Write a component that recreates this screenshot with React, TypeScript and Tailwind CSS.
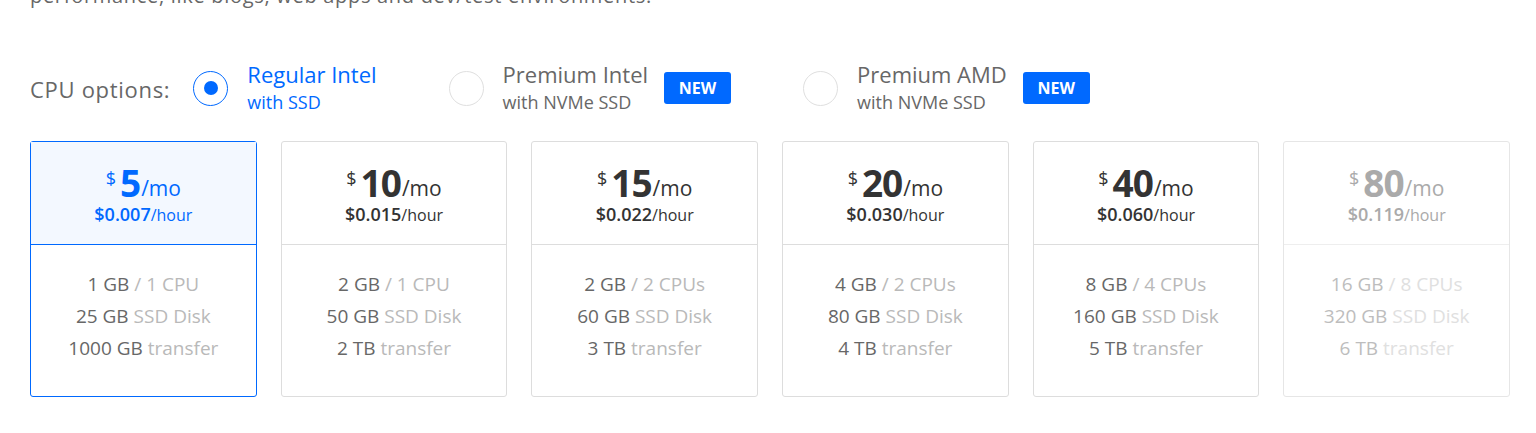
import React from "react";

// Droplet plan picker: CPU option radios + monthly plan cards

const OPTIONS = [
  { title: "Regular Intel", sub: "with SSD", selected: true, isNew: false },
  { title: "Premium Intel", sub: "with NVMe SSD", selected: false, isNew: true },
  { title: "Premium AMD", sub: "with NVMe SSD", selected: false, isNew: true },
];

const PLANS = [
  { mo: "5", hour: "$0.007", ram: "1 GB", cpu: "/ 1 CPU", disk: "25 GB", transfer: "1000 GB", state: "selected" },
  { mo: "10", hour: "$0.015", ram: "2 GB", cpu: "/ 1 CPU", disk: "50 GB", transfer: "2 TB", state: "normal" },
  { mo: "15", hour: "$0.022", ram: "2 GB", cpu: "/ 2 CPUs", disk: "60 GB", transfer: "3 TB", state: "normal" },
  { mo: "20", hour: "$0.030", ram: "4 GB", cpu: "/ 2 CPUs", disk: "80 GB", transfer: "4 TB", state: "normal" },
  { mo: "40", hour: "$0.060", ram: "8 GB", cpu: "/ 4 CPUs", disk: "160 GB", transfer: "5 TB", state: "normal" },
  { mo: "80", hour: "$0.119", ram: "16 GB", cpu: "/ 8 CPUs", disk: "320 GB", transfer: "6 TB", state: "disabled" },
];

function Radio({ selected }: { selected: boolean }) {
  return (
    <div
      className={
        "w-[35px] h-[35px] rounded-full border flex items-center justify-center bg-white " +
        (selected ? "border-[#0069ff]" : "border-[#dfdfdf]")
      }
    >
      {selected && <div className="w-[14px] h-[14px] rounded-full bg-[#0069ff]" />}
    </div>
  );
}

function PlanCard({ plan }: { plan: (typeof PLANS)[number] }) {
  const sel = plan.state === "selected";
  const dis = plan.state === "disabled";
  const priceColor = sel ? "text-[#0069ff]" : dis ? "text-[#aaaaaa]" : "text-[#333333]";
  const strong = dis ? "text-[#bdbdbd]" : "text-[#676767]";
  const light = dis ? "text-[#e0e0e0]" : "text-[#b9b9b9]";
  return (
    <div
      className={
        "rounded-[3px] border flex flex-col h-[256px] " +
        (sel ? "border-[#0069ff]" : dis ? "border-[#e6e6e6]" : "border-[#dddddd]")
      }
    >
      <div
        className={
          "h-[103px] flex flex-col items-center pt-[22px] border-b " +
          (sel ? "bg-[#f3f8ff] border-[#0069ff]" : dis ? "border-[#eeeeee]" : "border-[#dddddd]") +
          " " + priceColor
        }
      >
        <div className="flex items-start h-[38px]">
          <span className="text-[18px] leading-[20px] mt-[4px] mr-[4px]">$</span>
          <span className="text-[37px] font-bold tracking-[-1px] leading-[38px]">{plan.mo}</span>
          <span className="text-[21px] leading-[24px] mt-[12px] ml-[1px]">/mo</span>
        </div>
        <div className="leading-[24px]">
          <span className="text-[18px] font-semibold">{plan.hour}</span>
          <span className="text-[16px]">/hour</span>
        </div>
      </div>
      <div className="flex flex-col items-center pt-[23px] text-[19px] leading-[32px]">
        <div>
          <span className={strong}>{plan.ram}</span> <span className={light}>{plan.cpu}</span>
        </div>
        <div>
          <span className={strong}>{plan.disk}</span> <span className={light}>SSD Disk</span>
        </div>
        <div>
          <span className={strong}>{plan.transfer}</span> <span className={light}>transfer</span>
        </div>
      </div>
    </div>
  );
}

export default function App() {
  return (
    <div className="w-[1536px] h-[433px] bg-white overflow-hidden font-['Open_Sans',sans-serif]">
      <div className="pl-[30px] pr-[26px]">
        <p className="text-[20px] tracking-[0.7px] text-[#676767] leading-[24px] mt-[-16px]">
          performance, like blogs, web apps and dev/test environments.
        </p>

        {/* CPU options */}
        <div className="flex items-center mt-[48px] h-[64px]">
          <span className="text-[22px] tracking-[0.7px] text-[#676767] mr-[23px] mt-[2px]">CPU options:</span>
          {OPTIONS.map((o) => (
            <div key={o.title} className="flex items-center mr-[72px]">
              <Radio selected={o.selected} />
              <div className={"ml-[19px] flex flex-col " + (o.selected ? "text-[#0069ff]" : "text-[#676767]")}>
                <span className="text-[22px] leading-[28px]">{o.title}</span>
                <span className="text-[18px] leading-[28px]">{o.sub}</span>
              </div>
              {o.isNew && (
                <span className="ml-[16px] w-[67px] h-[32px] rounded-[3px] bg-[#0069ff] text-white text-[16px] font-bold flex items-center justify-center">
                  NEW
                </span>
              )}
            </div>
          ))}
        </div>

        {/* Plans */}
        <div className="grid grid-cols-6 gap-[24px] mt-[21px]">
          {PLANS.map((p) => (
            <PlanCard key={p.mo} plan={p} />
          ))}
        </div>
      </div>
    </div>
  );
}
